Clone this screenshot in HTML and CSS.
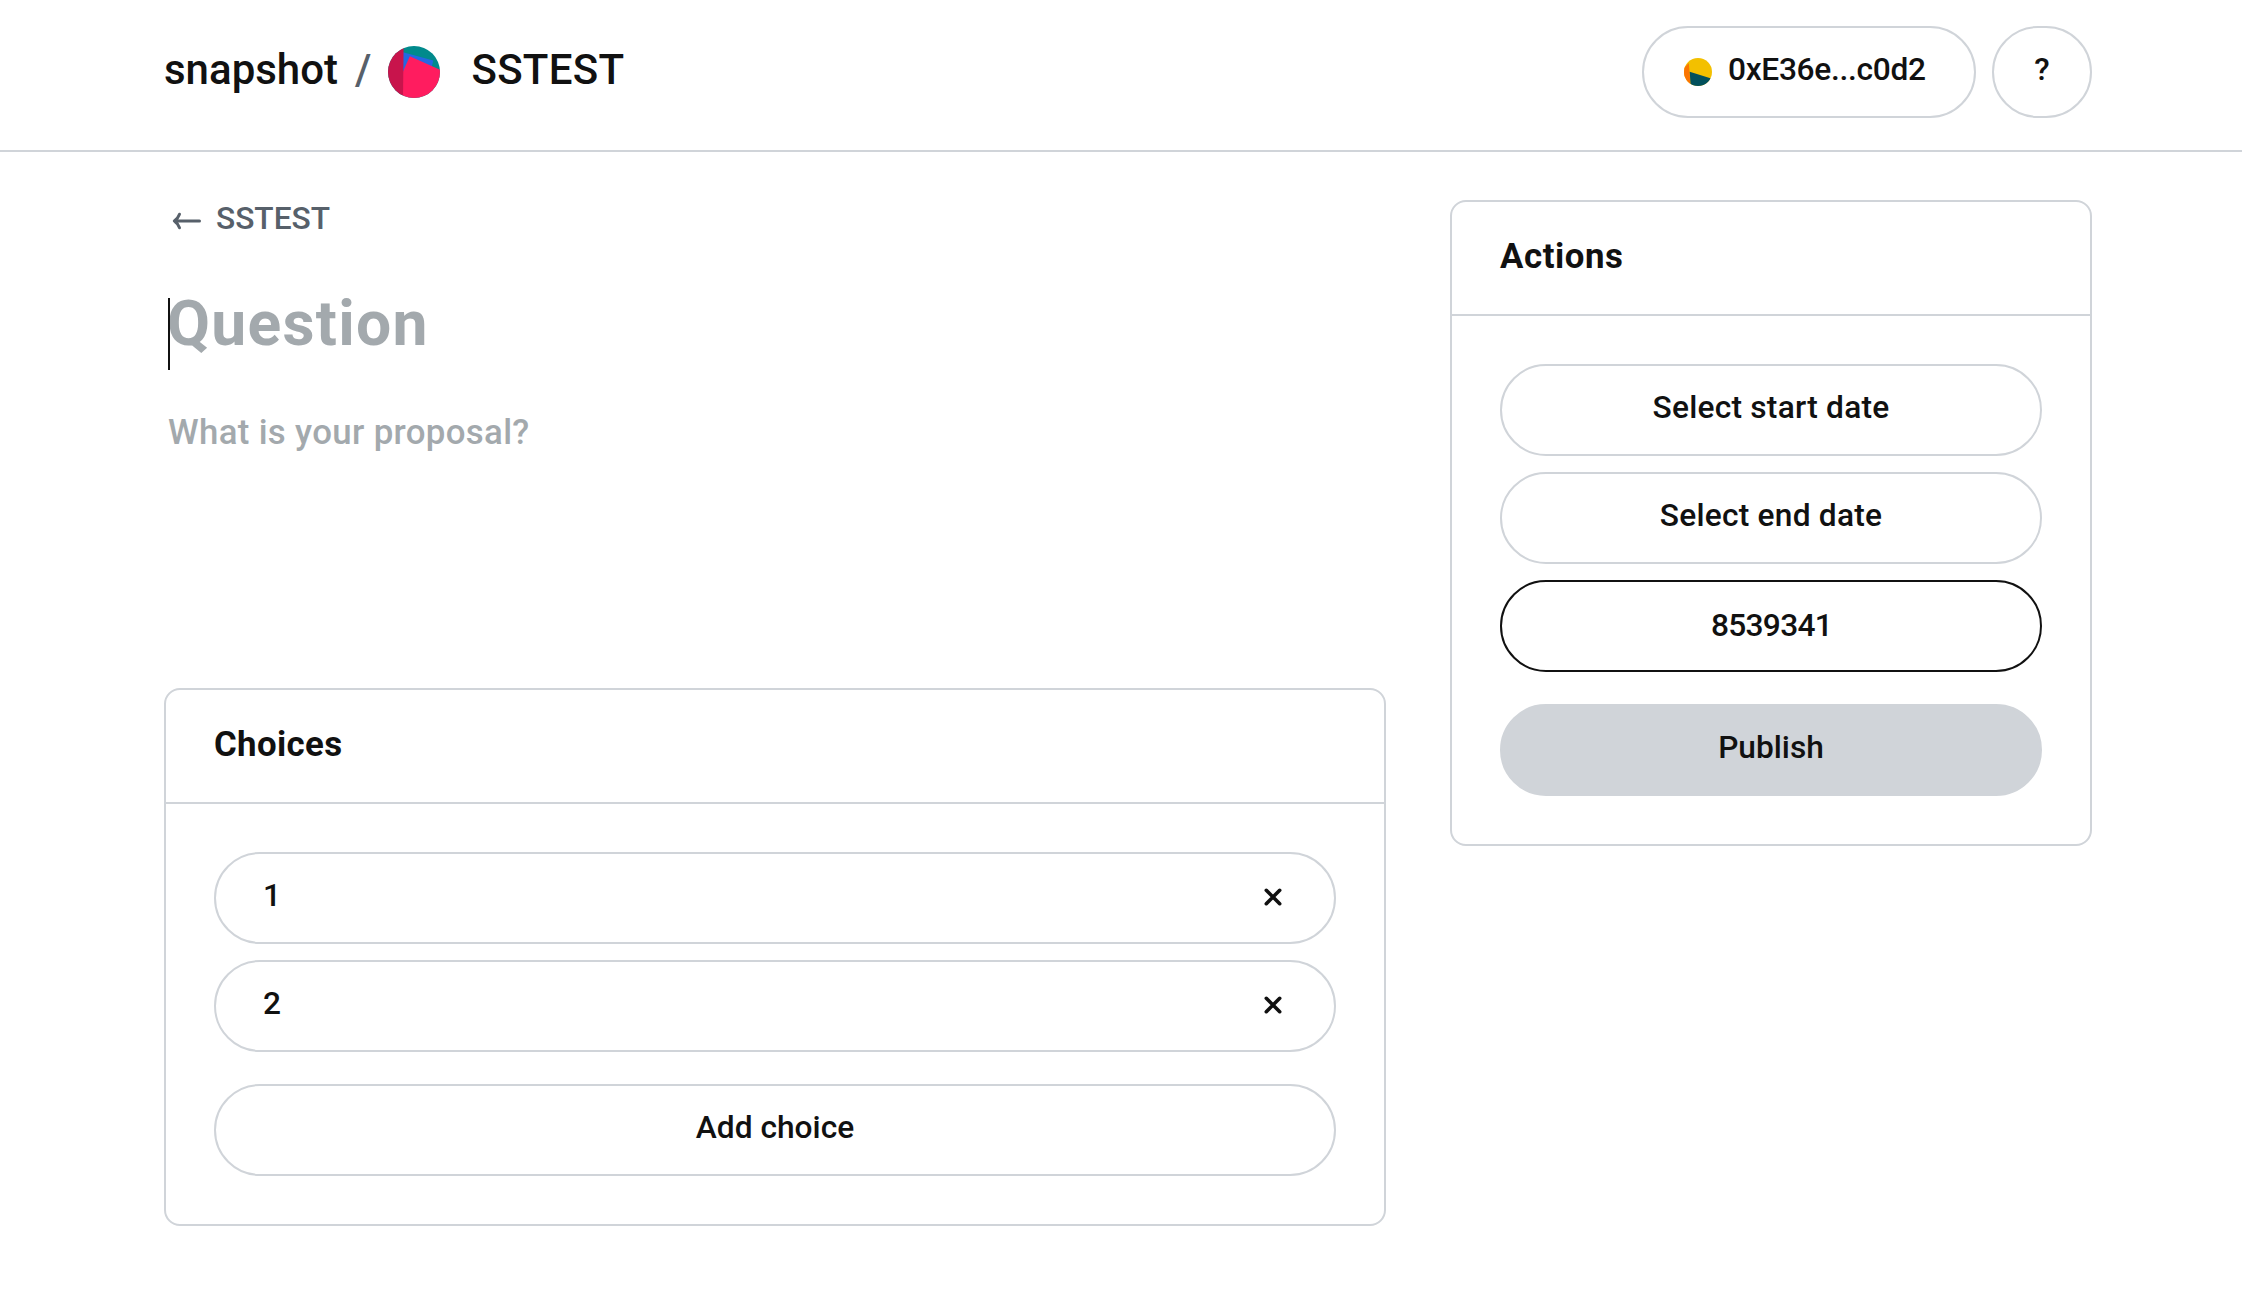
FILE: index.html
```html
<!DOCTYPE html>
<html lang="en">
<head>
<meta charset="utf-8">
<title>Snapshot – New proposal</title>
<link rel="stylesheet" href="styles.css">
</head>
<body>
<header class="topbar">
  <div class="container topbar-inner">
    <div class="brand">
      <span class="brand-name">snapshot</span>
      <span class="brand-slash">/</span>
      <svg class="space-avatar" viewBox="0 0 52 52">
        <clipPath id="space-clip"><circle cx="26" cy="26" r="26"/></clipPath>
        <g clip-path="url(#space-clip)">
          <rect width="52" height="52" fill="#018a8c"/>
          <path d="M15 6.3 45.3 14.6 43 24 15 30z" fill="#2468e1"/>
          <path d="M15 25.5 21.8 10.3 52 23.8V52H15z" fill="#ff1c5f"/>
          <path d="M0 0H15.6L15 52H0z" fill="#c8144c"/>
        </g>
      </svg>
      <span class="space-name">SSTEST</span>
    </div>
    <div class="account">
      <button class="pill account-pill">
        <svg class="user-avatar" viewBox="0 0 28 28">
          <clipPath id="user-clip"><circle cx="14" cy="14" r="14"/></clipPath>
          <g clip-path="url(#user-clip)">
            <rect width="28" height="28" fill="#f3c000"/>
            <path d="M0 10 4.8 5 6.7 28H0z" fill="#fb7502"/>
            <path d="M5.7 13.8 28 20.8V28H6.7z" fill="#01505c"/>
          </g>
        </svg>
        <span class="pill-text address">0xE36e...c0d2</span>
      </button>
      <button class="pill help-pill"><span class="pill-text">?</span></button>
    </div>
  </div>
</header>
<main class="container page">
  <section class="editor">
    <a class="back">
      <svg class="back-arrow" viewBox="0 0 30 20"><path d="M27.500 10H2.500M7.500 3.200C6.500 6 4.500 8.500 2.300 10 4.500 11.500 6.500 14 7.500 16.800"/></svg>
      <span>SSTEST</span>
    </a>
    <div class="question"><span class="caret"></span>Question</div>
    <div class="proposal">What is your proposal?</div>
    <div class="card">
      <h4 class="card-title choices-title">Choices</h4>
      <div class="card-body">
        <div class="pill choice"><span class="pill-text">1</span>
          <svg class="remove" viewBox="0 0 18 18"><path d="M2.300 2.300 15.700 15.700M15.700 2.300 2.300 15.700"/></svg></div>
        <div class="pill choice"><span class="pill-text">2</span>
          <svg class="remove" viewBox="0 0 18 18"><path d="M2.300 2.300 15.700 15.700M15.700 2.300 2.300 15.700"/></svg></div>
        <button class="pill spaced"><span class="pill-text">Add choice</span></button>
      </div>
    </div>
  </section>
  <aside class="card actions">
    <h4 class="card-title actions-title">Actions</h4>
    <div class="card-body">
      <button class="pill"><span class="pill-text date">Select start date</span></button>
      <button class="pill"><span class="pill-text date">Select end date</span></button>
      <div class="pill block-number"><span class="pill-text">8539341</span></div>
      <button class="pill publish spaced"><span class="pill-text">Publish</span></button>
    </div>
  </aside>
</main>
</body>
</html>
```
FILE: styles.css
```css
* { box-sizing: border-box; }
body {
  margin: 0;
  background: #fff;
  color: #111;
  font: 500 31.7px Roboto, "Liberation Sans", sans-serif;
}
.container { width: 1928px; margin: 0 150px 0 164px; }
.topbar { height: 152px; border-bottom: 2px solid #d0d4d9; }
.topbar-inner { display: flex; justify-content: space-between; }
.brand {
  display: flex;
  align-items: flex-start;
  font-size: 42px;
  line-height: 140px;
}
.brand-slash { margin: 0 17px 0 17px; color: #57606a; }
.space-avatar { width: 52px; height: 52px; margin: 46px 31px 0 0; }
.space-name { letter-spacing: .3px; }
.account { display: flex; gap: 16px; padding-top: 26px; }

.pill {
  display: flex;
  align-items: flex-start;
  justify-content: center;
  width: 100%;
  height: 92px;
  padding: 0;
  border: 2px solid #d0d4d9;
  border-radius: 46px;
  background: transparent;
  color: inherit;
  font: inherit;
}
.pill-text { line-height: 84px; }
.account-pill { width: 334px; justify-content: flex-start; padding-left: 40px; gap: 16px; }
.help-pill { width: 100px; }
.user-avatar { width: 28px; height: 28px; align-self: center; }
.address { letter-spacing: -.31px; }

.page { display: flex; justify-content: space-between; align-items: flex-start; padding-top: 48px; }
.editor { width: 1222px; }
.actions { width: 642px; }
.back {
  display: flex;
  align-items: center;
  gap: 14px;
  height: 38px;
  padding-left: 8px;
  line-height: 40px;
  color: #57606a;
}
.back-arrow {
  width: 30px;
  height: 20px;
  margin-top: 4px;
  fill: none;
  stroke: currentColor;
  stroke-width: 3;
  stroke-linecap: round;
  stroke-linejoin: round;
}
.question {
  position: relative;
  height: 72px;
  margin-top: 60px;
  padding-left: 3px;
  font-size: 62.4px;
  font-weight: 700;
  line-height: 51px;
  letter-spacing: 1.28px;
  color: #a3a9ad;
}
.caret { position: absolute; left: 4px; top: 0; width: 2px; height: 72px; background: #111; }
.proposal {
  height: 283px;
  margin-top: 35px;
  padding-left: 4px;
  font-size: 34.8px;
  line-height: 54px;
  letter-spacing: .34px;
  color: #a3a9ad;
}

.card { border: 2px solid #d0d4d9; border-radius: 16px; }
.card-title {
  height: 114px;
  margin: 0;
  padding-left: 48px;
  border-bottom: 2px solid #d0d4d9;
  font-size: 34.8px;
  font-weight: 700;
  line-height: 109px;
}
.actions-title { letter-spacing: .58px; }
.choices-title { letter-spacing: .35px; }
.card-body { display: flex; flex-direction: column; gap: 16px; padding: 48px; }
.choice { justify-content: space-between; padding: 0 52px 0 47px; }
.remove {
  width: 18px;
  height: 18px;
  margin-top: 34px;
  fill: none;
  stroke: #111;
  stroke-width: 3.6;
  stroke-linecap: round;
}
.spaced { margin-top: 16px; }
.date { letter-spacing: .23px; }
.block-number { border-color: #111; letter-spacing: -.69px; }
.block-number .pill-text { padding-left: 1px; line-height: 87px; }
.publish { background: #d0d4d9; }
```
